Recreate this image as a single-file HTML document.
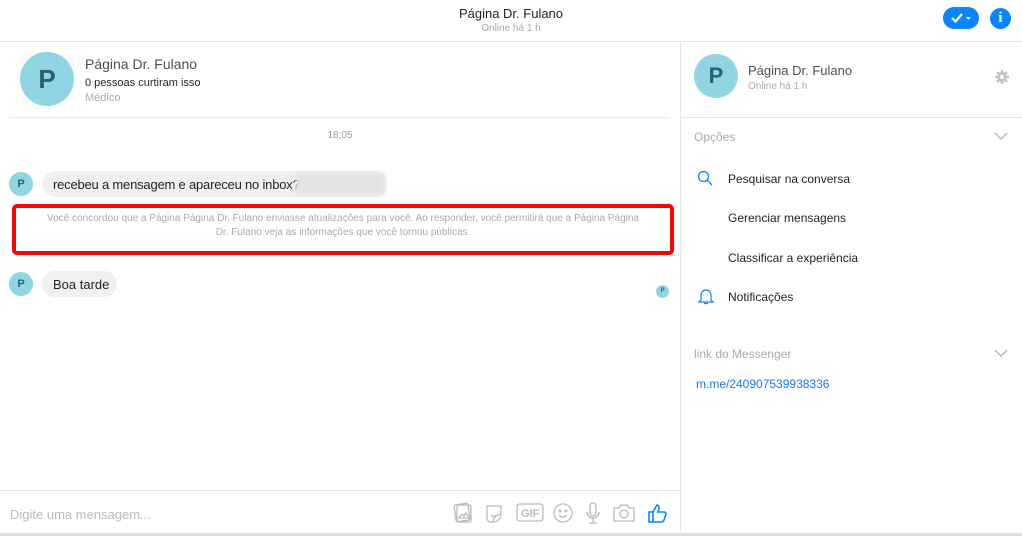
<!DOCTYPE html>
<html><head><meta charset="utf-8"><style>
*{margin:0;padding:0;box-sizing:border-box}
body{width:1022px;height:536px;overflow:hidden;background:#fff;font-family:"Liberation Sans",sans-serif;position:relative;color:#1d2129}
.abs{position:absolute}
.av{position:absolute;border-radius:50%;background:#8fd5e2;color:#2e5e78;font-weight:bold;text-align:center}
.t{position:absolute;white-space:nowrap}
</style></head><body>
<div class="abs" style="left:0;top:41px;width:1022px;height:1px;background:#e5e5e5"></div>
<div class="t" style="left:0;width:1022px;text-align:center;top:6px;font-size:13px">Página Dr. Fulano</div>
<div class="t" style="left:0;width:1022px;text-align:center;top:23px;font-size:10px;color:#aaa">Online há 1 h</div>
<div class="abs" style="left:943px;top:7px;width:36px;height:22px;border-radius:11px;background:#0a84ff"></div>
<svg class="abs" style="left:950px;top:11px" width="24" height="14"><path d="M2 7l3.5 3.5L12 3" stroke="#fff" stroke-width="2.2" fill="none"/><path d="M16 6h5l-2.5 3z" fill="#fff"/></svg>
<div class="abs" style="left:990px;top:8px;width:21px;height:21px;border-radius:50%;background:#0a84ff;color:#fff;font-weight:bold;font-size:15px;text-align:center;line-height:21px;font-family:'Liberation Serif',serif">i</div>

<div class="abs" style="left:680px;top:42px;width:1px;height:494px;background:#e5e5e5"></div>

<div class="av" style="left:20px;top:52px;width:54px;height:54px;font-size:26px;line-height:54px">P</div>
<div class="t" style="left:85px;top:56px;font-size:14px;color:#4b4f56">Página Dr. Fulano</div>
<div class="t" style="left:85px;top:77px;font-size:11px">0 pessoas curtiram isso</div>
<div class="t" style="left:85px;top:92px;font-size:11px;color:#aaa">Médico</div>
<div class="abs" style="left:9px;top:117px;width:661px;height:1px;background:#e9e9e9"></div>
<div class="t" style="left:0;width:680px;text-align:center;top:130px;font-size:10px;color:#999">18:05</div>

<div class="av" style="left:9px;top:172px;width:24px;height:24px;font-size:11px;line-height:24px">P</div>
<div class="abs" style="left:42px;top:171px;width:346px;height:26px;border-radius:13px;background:#f1f0f0"></div>
<div class="t" style="left:53px;top:177px;font-size:13px;letter-spacing:-0.2px">recebeu a mensagem e apareceu no inbox?</div>
<div class="abs" style="left:296px;top:173px;width:88px;height:22px;background:#e3e3e3;filter:blur(2px)"></div>

<div class="abs" style="left:12px;top:204px;width:662px;height:51px;border:4px solid #f00;border-radius:5px"></div>
<div class="t" style="left:12px;width:662px;text-align:center;top:212px;font-size:10px;color:#aaa;line-height:14px;white-space:normal">Você concordou que a Página Página Dr. Fulano enviasse atualizações para você. Ao responder, você permitirá que a Página Página<br>Dr. Fulano veja as informações que você tornou públicas.</div>

<div class="av" style="left:9px;top:272px;width:24px;height:24px;font-size:11px;line-height:24px">P</div>
<div class="abs" style="left:42px;top:271px;width:75px;height:26px;border-radius:13px;background:#f1f0f0"></div>
<div class="t" style="left:53px;top:277px;font-size:13px">Boa tarde</div>
<div class="av" style="left:656px;top:285px;width:13px;height:13px;font-size:6px;line-height:13px">P</div>

<div class="abs" style="left:0;top:490px;width:680px;height:1px;background:#e5e5e5"></div>
<div class="t" style="left:10px;top:507px;font-size:13px;color:#bbb">Digite uma mensagem...</div>
<svg class="abs" style="left:450px;top:500px" width="222" height="26" fill="none" stroke="#bbb" stroke-width="1.3">
<rect x="5" y="4" width="14" height="17" rx="1.5" transform="rotate(-8 12 12)"/><rect x="7" y="5" width="14" height="17" rx="1.5"/><path d="M9 18l3-4 2 2 2-3 3 5z"/>
<path d="M37 6h14v8a8 8 0 0 1-8 8h-2a4 4 0 0 1-4-4z"/><path d="M41 15q3 3 6 0"/><path d="M43 22q0-6 8-8"/>
<rect x="67" y="4" width="26" height="17" rx="3"/><text x="71" y="17" font-size="11" fill="#bbb" stroke="none" font-family="Liberation Sans" font-weight="bold">GIF</text>
<circle cx="113" cy="13" r="9"/><circle cx="110" cy="11" r=".8" fill="#bbb"/><circle cx="116" cy="11" r=".8" fill="#bbb"/><path d="M109 15q4 4 8 0"/>
<rect x="140" y="3" width="6" height="13" rx="3"/><path d="M137 12a6 6 0 0 0 12 0M143 18v5M139 23h8"/>
<path d="M164 8h5l2-3h6l2 3h5v13h-20z"/><circle cx="174" cy="14" r="4"/>
<path d="M199 12h4v10h-4zM203 12l4-7q2 0 2 3l-1 4h6q2 0 2 2l-2 6q-1 2-3 2h-8z" stroke="#0a84ff" stroke-width="1.6"/>
</svg>
<div class="abs" style="left:0;top:533px;width:680px;height:3px;background:#ddd"></div>

<div class="av" style="left:694px;top:54px;width:44px;height:44px;font-size:22px;line-height:44px">P</div>
<div class="t" style="left:748px;top:63px;font-size:13px;color:#4b4f56">Página Dr. Fulano</div>
<div class="t" style="left:748px;top:81px;font-size:10px;color:#aaa">Online há 1 h</div>
<svg class="abs" style="left:994px;top:69px" width="16" height="16"><g fill="#c4c4c4"><circle cx="8" cy="8" r="5"/><g stroke="#c4c4c4" stroke-width="2.5"><path d="M8 1v14M1 8h14M3 3l10 10M13 3L3 13"/></g></g><circle cx="8" cy="8" r="2" fill="#fff"/></svg>
<div class="abs" style="left:681px;top:117px;width:341px;height:1px;background:#e5e5e5"></div>
<div class="t" style="left:694px;top:130px;font-size:12px;color:#aaa">Opções</div>
<svg class="abs" style="left:994px;top:132px" width="14" height="9"><path d="M1 1l6 6 6-6" stroke="#bbb" stroke-width="1.5" fill="none"/></svg>
<svg class="abs" style="left:697px;top:170px" width="16" height="16"><circle cx="6.5" cy="6.5" r="5" stroke="#0a84ff" stroke-width="1.3" fill="none"/><path d="M10 10l5 5" stroke="#0a84ff" stroke-width="1.3"/></svg>
<div class="t" style="left:728px;top:172px;font-size:12px">Pesquisar na conversa</div>
<div class="t" style="left:728px;top:211px;font-size:12px">Gerenciar mensagens</div>
<div class="t" style="left:728px;top:251px;font-size:12px">Classificar a experiência</div>
<svg class="abs" style="left:698px;top:287px" width="16" height="18"><path d="M3 13V8a5 5 0 0 1 10 0v5l2 2H1z M6 16.5h4" stroke="#0a84ff" stroke-width="1.2" fill="none"/></svg>
<div class="t" style="left:728px;top:290px;font-size:12px">Notificações</div>
<div class="t" style="left:694px;top:347px;font-size:12px;color:#aaa">link do Messenger</div>
<svg class="abs" style="left:994px;top:349px" width="14" height="9"><path d="M1 1l6 6 6-6" stroke="#bbb" stroke-width="1.5" fill="none"/></svg>
<div class="t" style="left:696px;top:377px;font-size:12px;color:#1877f2">m.me/240907539938336</div>
<div class="abs" style="left:681px;top:533px;width:341px;height:3px;background:#ddd"></div>
</body></html>
